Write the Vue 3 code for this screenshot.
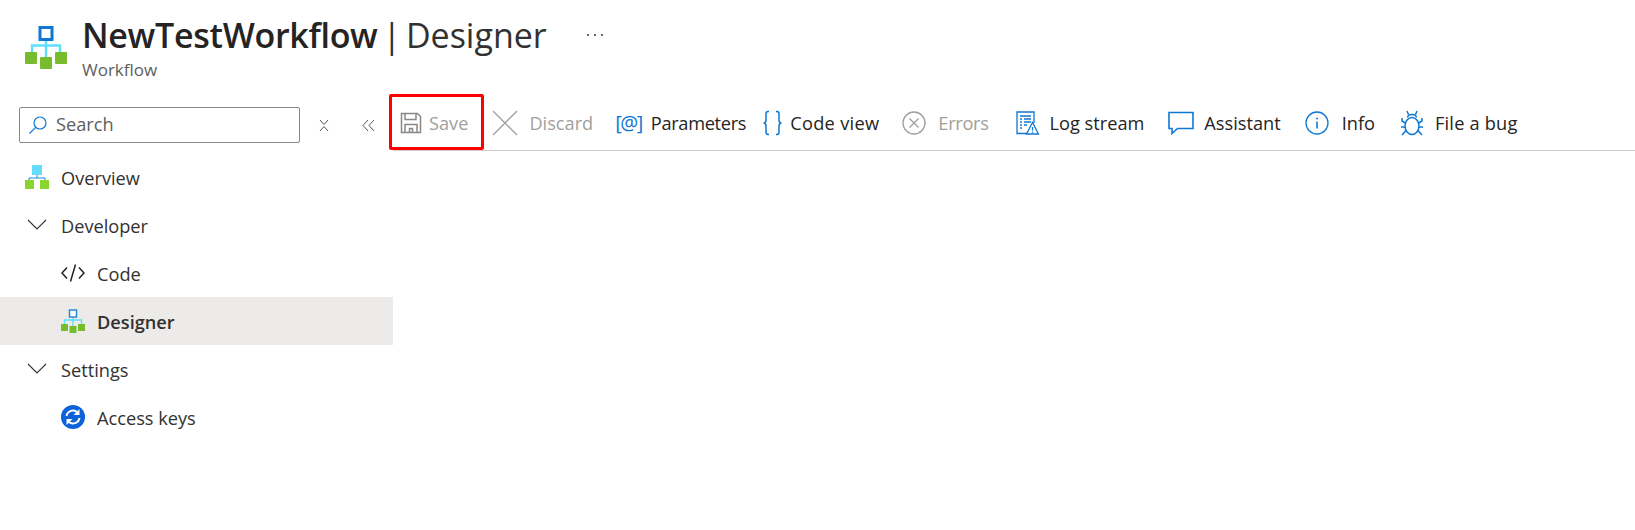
<script setup>
const tools = [
  { id: 'save', label: 'Save', off: true },
  { id: 'discard', label: 'Discard', off: true },
  { id: 'params', label: 'Parameters' },
  { id: 'code', label: 'Code view' },
  { id: 'errors', label: 'Errors', off: true },
  { id: 'log', label: 'Log stream' },
  { id: 'assistant', label: 'Assistant' },
  { id: 'info', label: 'Info' },
  { id: 'bug', label: 'File a bug' }
]
</script>

<template>
  <div class="page">
    <header class="head">
      <svg class="logo" width="44" height="44" viewBox="0 0 44 44">
        <path d="M22 14v18M8 29v-9.5h28V29" fill="none" stroke="#5ee0fb" stroke-width="2.4" />
        <rect x="16" y="1.500" width="12" height="12" fill="#fff" stroke="#0f78d4" stroke-width="3" />
        <rect x="1" y="26" width="12" height="12" rx="1" fill="#76bc2d" />
        <rect x="16" y="31" width="12" height="12" rx="1" fill="#76bc2d" />
        <rect x="31" y="26" width="12" height="12" rx="1" fill="#76bc2d" />
      </svg>
      <div class="titles">
        <h1 class="title"><b>NewTestWorkflow</b> | Designer</h1>
        <div class="sub">Workflow</div>
      </div>
      <svg class="more" width="18" height="4" viewBox="0 0 18 4" fill="#323130">
        <circle cx="2" cy="2" r="1" />
        <circle cx="9" cy="2" r="1" />
        <circle cx="16" cy="2" r="1" />
      </svg>
    </header>

    <div class="body">
      <aside class="side">
        <div class="search-row">
          <div class="search">
            <svg width="20" height="20" viewBox="0 0 20 20" fill="none" stroke="#0f78d4" stroke-width="1.200">
              <circle cx="12" cy="8" r="6" />
              <path d="M7.700 12.300 1.500 18.500" />
            </svg>
            <span class="search-text">Search</span>
          </div>
          <svg class="collapse-x" width="10" height="13" viewBox="0 0 10 13" fill="none" stroke="#555" stroke-width="1">
            <path d="M1 1l4 4.500L9 1M1 12l4-4.500L9 12" />
          </svg>
          <svg class="collapse-l" width="13" height="13" viewBox="0 0 13 13" fill="none" stroke="#555" stroke-width="1">
            <path d="M6 1 1 6.500 6 12M12 1 7 6.500l5 5.500" />
          </svg>
        </div>
        <nav class="nav">
          <div class="item">
            <svg width="24" height="24" viewBox="0 0 24 24">
              <path d="M12 10v3M4 16v-3h16v3" fill="none" stroke="#1a86d8" stroke-width="1" />
              <rect x="7" y="0" width="10" height="10" fill="#66dcfb" />
              <rect x="0" y="15" width="9" height="9" fill="#8bd62e" />
              <rect x="15" y="15" width="9" height="9" fill="#8bd62e" />
            </svg>
            <span>Overview</span>
          </div>
          <div class="item">
            <svg width="24" height="24" viewBox="0 0 24 24" fill="none" stroke="#323130" stroke-width="1.100">
              <path d="M3 7l9 9 9-9" />
            </svg>
            <span>Developer</span>
          </div>
          <div class="item child">
            <svg width="24" height="24" viewBox="0 0 24 24" fill="none" stroke="#222" stroke-width="1.500">
              <path d="M6 6.500 1 12l5 5.500M18 6.500l5 5.500-5 5.500M14.500 3.500 9.500 20.500" />
            </svg>
            <span>Code</span>
          </div>
          <div class="item child active">
            <svg width="24" height="24" viewBox="0 0 24 24">
              <path d="M12 8v10M3.500 16v-5h17v5" fill="none" stroke="#5ee0fb" stroke-width="1.400" />
              <rect x="8.500" y="1" width="7" height="7" fill="#fff" stroke="#2b88d8" stroke-width="1.500" />
              <rect x="0" y="15" width="7" height="7" fill="#76bc2d" />
              <rect x="8.500" y="17" width="7" height="7" fill="#76bc2d" />
              <rect x="17" y="15" width="7" height="7" fill="#76bc2d" />
            </svg>
            <span>Designer</span>
          </div>
          <div class="item">
            <svg width="24" height="24" viewBox="0 0 24 24" fill="none" stroke="#323130" stroke-width="1.100">
              <path d="M3 7l9 9 9-9" />
            </svg>
            <span>Settings</span>
          </div>
          <div class="item child">
            <svg width="24" height="24" viewBox="0 0 24 24">
              <circle cx="12" cy="12" r="12" fill="#0b62d9" />
              <path d="M5.500 11a6.500 6.500 0 0 1 11-3.500" fill="none" stroke="#fff" stroke-width="2" />
              <path d="M18.500 13a6.500 6.500 0 0 1-11 3.500" fill="none" stroke="#fff" stroke-width="2" />
              <path d="M18.500 4v6h-6zM5.500 20v-6h6z" fill="#fff" />
            </svg>
            <span>Access keys</span>
          </div>
        </nav>
      </aside>

      <main class="main">
        <div class="toolbar">
          <button v-for="t in tools" :key="t.id" class="tool" :class="[t.id, { off: t.off }]">
            <svg v-if="t.id === 'save'" width="22" height="22" viewBox="0 0 22 22" fill="none" stroke="#8a8886" stroke-width="1.500">
              <path d="M1.500 1.500h16l3 3v16h-19z" />
              <path d="M5 1.500v6h11v-6M5 20.500v-8h12v8M9.500 20.500v-4h3v4" />
            </svg>
            <svg v-else-if="t.id === 'discard'" width="26" height="26" viewBox="0 0 26 26" fill="none" stroke="#a19f9d" stroke-width="1.300">
              <path d="M1 1l24 24M25 1 1 25" />
            </svg>
            <span v-else-if="t.id === 'params'" class="glyph">[@]</span>
            <svg v-else-if="t.id === 'code'" width="19" height="26" viewBox="0 0 19 26" fill="none" stroke="#0f78d4" stroke-width="1.500">
              <path d="M6 1.500H5Q3 1.500 3 4v6q0 3-2.500 3Q3 13 3 16v6q0 2.500 2 2.500h1" />
              <path d="M13 1.500h1q2 0 2 2.500v6q0 3 2.500 3-2.500 0-2.500 3v6q0 2.500-2 2.500h-1" />
            </svg>
            <svg v-else-if="t.id === 'errors'" width="24" height="24" viewBox="0 0 24 24" fill="none" stroke="#a19f9d" stroke-width="1.300">
              <circle cx="12" cy="12" r="11" />
              <path d="M7.500 7.500l9 9M16.500 7.500l-9 9" />
            </svg>
            <svg v-else-if="t.id === 'log'" width="24" height="24" viewBox="0 0 24 24" fill="none" stroke="#0f78d4" stroke-width="1.300">
              <path d="M11 22.500H1V1h17v11" />
              <path d="M4 5h11M4 8h2M8 8h7M4 11h2M8 11h7M4 14h2M8 14h3M4 17h2" />
              <path d="M16.500 11.500 10.500 23h12zM16.500 16v3.500M16.500 20.500v1.300" />
            </svg>
            <svg v-else-if="t.id === 'assistant'" width="26" height="24" viewBox="0 0 26 24" fill="none" stroke="#0f78d4" stroke-width="1.600">
              <path d="M1 1.500h24v16H9.500L4 22.500v-5H1z" />
            </svg>
            <svg v-else-if="t.id === 'info'" width="24" height="24" viewBox="0 0 24 24" fill="none" stroke="#0f78d4" stroke-width="1.300">
              <circle cx="12" cy="12" r="11" />
              <path d="M12 10.500v7" stroke-width="1.600" />
              <circle cx="12" cy="7.500" r="1" fill="#0f78d4" stroke="none" />
            </svg>
            <svg v-else width="24" height="26" viewBox="0 0 24 26" fill="none" stroke="#0f78d4" stroke-width="1.500">
              <ellipse cx="12" cy="16" rx="7" ry="8.500" />
              <path d="M7.500 7.500Q8 4.500 12 4.500T16.500 7.500M7 1l1.500 3.500M17 1l-1.500 3.500M2 8v3l4 2.500M22 8v3l-4 2.500M1 17h4M23 17h-4M2 25l4-4.500M22 25l-4-4.500" />
            </svg>
            <span class="label">{{ t.label }}</span>
          </button>
        </div>
      </main>
    </div>
  </div>
</template>

<style scoped>
.page {
  width: 1635px;
  height: 530px;
  background: #fff;
  color: #323130;
  font-family: "Open Sans", "Noto Sans", sans-serif;
  overflow: hidden;
}
.head {
  height: 96px;
  display: flex;
  align-items: flex-start;
  padding-left: 24px;
  box-sizing: border-box;
}
.logo { margin-top: 26px; flex: none; }
.titles { margin-left: 14px; margin-top: 12px; }
.title {
  margin: 0;
  font-size: 34px;
  line-height: 46px;
  font-weight: 400;
  color: #323130;
  white-space: nowrap;
  word-spacing: -4px;
}
.title b { font-weight: 600; color: #252423; letter-spacing: -0.3px; }
.sub { margin-top: 2px; font-size: 17px; line-height: 20px; color: #605e5c; }
.more { margin-left: 39px; margin-top: 33px; flex: none; }
.body { display: flex; }
.side { width: 393px; flex: none; }
.search-row {
  height: 55px;
  display: flex;
  align-items: center;
  padding: 3px 0 0 19px;
  box-sizing: border-box;
}
.search {
  width: 281px;
  height: 36px;
  box-sizing: border-box;
  border: 1px solid #8a8886;
  border-radius: 2px;
  display: flex;
  align-items: center;
  gap: 8px;
  padding-left: 8px;
  font-size: 18.200px;
  color: #605e5c;
}
.search-text { padding-bottom: 2px; }
.collapse-x { margin-left: 19px; }
.collapse-l { margin-left: 33px; }
.nav { padding-top: 2px; }
.item {
  height: 48px;
  display: flex;
  align-items: center;
  gap: 12px;
  padding-left: 25px;
  font-size: 18.200px;
  color: #323130;
}
.item span { padding-top: 1px; }
.item.child { padding-left: 61px; }
.item.active { background: #edebe9; font-weight: 600; }
.main { flex: 1; min-width: 0; }
.toolbar {
  height: 55px;
  box-sizing: border-box;
  border-bottom: 1px solid #d2d0ce;
  display: flex;
  align-items: center;
  padding-left: 7px;
}
.tool {
  position: relative;
  display: flex;
  align-items: center;
  gap: 9px;
  border: 0;
  padding: 0;
  background: none;
  font: inherit;
  font-size: 18.200px;
  color: #252423;
  white-space: nowrap;
}
.tool.off { color: #a19f9d; }
.tool.save { gap: 7px; }
.tool.save::after {
  content: "";
  position: absolute;
  left: -11px;
  right: -16px;
  top: -17px;
  bottom: -15px;
  border: 3px solid #f00;
  border-radius: 2px;
}
.discard { margin-left: 24px; gap: 11px; }
.params { margin-left: 22px; }
.code { margin-left: 17px; gap: 8px; }
.errors { margin-left: 23px; gap: 12px; }
.log { margin-left: 27px; gap: 10px; }
.assistant { margin-left: 24px; gap: 10px; }
.info { margin-left: 24px; gap: 13px; }
.bug { margin-left: 25px; gap: 11px; }
.params .label { letter-spacing: -0.3px; }
.code .label { letter-spacing: 0.3px; }
.errors .label { letter-spacing: -0.3px; }
.bug .label { letter-spacing: 0.2px; }
.glyph { color: #0f78d4; font-size: 20px; line-height: 24px; letter-spacing: -1.500px; }
</style>

<style>
html, body { background: #fff; }
</style>
